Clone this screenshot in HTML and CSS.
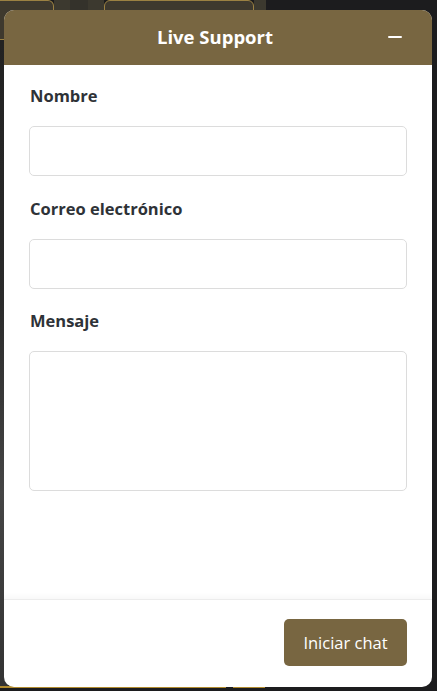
FILE: index.html
```html
<!DOCTYPE html>
<html lang="es">
<head>
<meta charset="utf-8">
<title>Live Support</title>
<link rel="stylesheet" href="styles.css">
</head>
<body>
<div class="backdrop">
  <div class="topstrip">
    <div class="tab tab-a"></div>
    <div class="gap gap-a"></div>
    <div class="gap gap-b"></div>
    <div class="gap gap-c"></div>
    <div class="tab tab-b"></div>
    <div class="gap gap-d"></div>
  </div>
  <div class="side"></div>
  <div class="bottomline">
    <div class="gold g1"></div>
    <div class="gold g2"></div>
  </div>
</div>

<div class="widget">
  <header class="widget-header">
    <h1 class="widget-title">Live Support</h1>
    <button class="minimize" aria-label="Minimizar">
      <svg width="14" height="4" viewBox="0 0 14 4"><rect x="0" y="1" width="14" height="2" rx="1" fill="#fff"/></svg>
    </button>
  </header>
  <form class="widget-body">
    <label class="field-label" for="nombre">Nombre</label>
    <input class="field-input" id="nombre" type="text">
    <label class="field-label" for="correo">Correo electrónico</label>
    <input class="field-input" id="correo" type="email">
    <label class="field-label" for="mensaje">Mensaje</label>
    <textarea class="field-input field-area" id="mensaje"></textarea>
  </form>
  <footer class="widget-footer">
    <button class="start-btn" type="button">Iniciar chat</button>
  </footer>
</div>
</body>
</html>
```

FILE: styles.css
```css
* { box-sizing: border-box; }
html, body { margin: 0; padding: 0; }
body {
  width: 437px;
  height: 691px;
  background: #1c1c1e;
  overflow: hidden;
  font-family: "Open Sans", "Noto Sans", sans-serif;
  position: relative;
}
.backdrop {
  height: 691px;
  display: flex;
  flex-direction: column;
}
.topstrip {
  display: flex;
  height: 40px;
}
.tab {
  height: 40px;
  background: #3e392e;
  border: 1px solid #9b8142;
}
.tab-a { width: 54px; border-radius: 0 6px 6px 0; border-left: none; }
.tab-b { width: 150px; border-radius: 6px; }
.gap { height: 40px; }
.gap-a { width: 16px; background: #3c392f; }
.gap-b { width: 18px; background: #34322b; }
.gap-c { width: 16px; background: #3c392f; }
.gap-d { width: 12px; background: #3c392f; }
.side {
  flex: 1;
  width: 8px;
  background: linear-gradient(#222 0%, #2a2a2a 40%, #454545 70%, #333 100%);
}
.bottomline {
  display: flex;
  height: 5px;
}
.gold { height: 2px; background: #b08a2e; }
.g1 { width: 226px; }
.g2 { width: 32px; margin-left: 7px; }

.widget {
  position: absolute;
  left: 4px;
  top: 10px;
  width: 428px;
  height: 677px;
  background: #fff;
  border-radius: 10px;
  overflow: hidden;
  display: flex;
  flex-direction: column;
}
.widget-header {
  height: 55px;
  flex: none;
  background: #786641;
  display: flex;
  align-items: center;
  justify-content: center;
  position: relative;
  padding-right: 6px;
}
.widget-title {
  margin: 0 0 1px 0;
  color: #fff;
  font-size: 18.5px;
  font-weight: 700;
  line-height: 1;
}
.minimize {
  position: absolute;
  right: 30px;
  top: 25px;
  padding: 0;
  border: none;
  background: none;
  width: 14px;
  height: 4px;
  display: block;
}
.minimize svg { display: block; }
.widget-body {
  flex: 1;
  margin: 0;
  padding: 19px 25px 0 25px;
  display: flex;
  flex-direction: column;
  box-shadow: inset 0 -8px 8px -8px rgba(0,0,0,0.06);
}
.field-label {
  display: block;
  color: #2e3237;
  font-size: 16.5px;
  font-weight: 700;
  line-height: 24px;
  padding-left: 1px;
  margin-bottom: 18px;
}
.field-input {
  display: block;
  width: 100%;
  height: 50px;
  flex: none;
  border: 1px solid #dcdcdc;
  border-radius: 5px;
  background: #fff;
  margin: 0 0 20.5px 0;
  font: inherit;
}
.field-area {
  height: 140px;
  resize: none;
}
.widget-footer {
  height: 88px;
  flex: none;
  border-top: 1px solid #ececec;
  display: flex;
  justify-content: flex-end;
  align-items: flex-start;
  padding: 19px 25px 0 0;
}
.start-btn {
  width: 123px;
  height: 47px;
  background: #786641;
  color: #fff;
  border: none;
  border-radius: 5px;
  font-family: "Open Sans", "Noto Sans", sans-serif;
  font-size: 16.5px;
  padding: 0;
}
```
